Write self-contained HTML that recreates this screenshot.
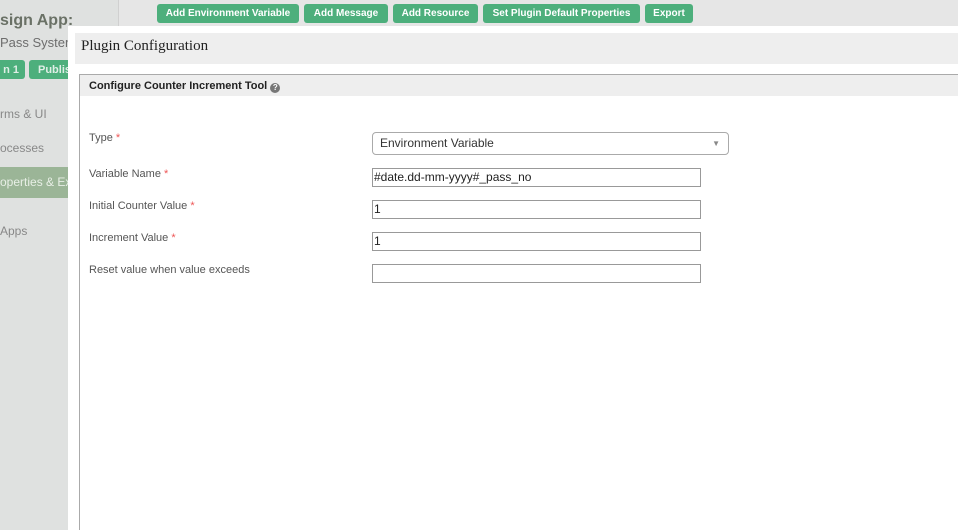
<!DOCTYPE html>
<html><head><style>
*{margin:0;padding:0;box-sizing:border-box}
body{width:958px;height:530px;overflow:hidden;position:relative;background:#e6e6e6;font-family:"Liberation Sans",Arial,sans-serif}
.side{position:absolute;left:0;top:0;width:119px;height:530px;background:#dfe1e0;border-right:1px solid #d0d0d0}
.abs{position:absolute;white-space:nowrap}
.btn{position:absolute;top:4px;height:19px;background:#4daf7c;color:#fff;font-size:10px;font-weight:bold;border-radius:3px;text-align:center;line-height:20px}
.modal{position:absolute;left:68px;top:26px;width:890px;height:504px;background:#fff}
.lbl{position:absolute;left:89px;font-size:11px;color:#555}
.req{color:#e55}
.inp{position:absolute;left:372px;width:329px;height:19px;border:1px solid #999;font-size:12px;line-height:17px;padding-left:1px;color:#222}
</style></head><body>
<div class="side">
<div class="abs" style="left:0;top:12px;font-size:16px;font-weight:bold;color:#6a7166">sign App:</div>
<div class="abs" style="left:0;top:35px;font-size:13px;color:#6d6d6d">Pass System</div>
<div class="abs" style="left:-10px;top:60px;width:35px;height:19px;background:#4daf7c;border-radius:3px;color:#dfeee6;font-size:11px;font-weight:bold;line-height:20px;text-align:right;padding-right:6px">n 1</div>
<div class="abs" style="left:29px;top:60px;width:50px;height:19px;background:#4daf7c;border-radius:3px;color:#dfeee6;font-size:11px;font-weight:bold;line-height:20px;padding-left:9px">Publis</div>
<div class="abs" style="left:0;top:107px;font-size:12px;color:#888">rms &amp; UI</div>
<div class="abs" style="left:0;top:141px;font-size:12px;color:#888">ocesses</div>
<div class="abs" style="left:0;top:167px;width:119px;height:31px;background:#9bb597"></div>
<div class="abs" style="left:0;top:175px;font-size:12px;color:#e8efe6">operties &amp; Exp</div>
<div class="abs" style="left:0;top:224px;font-size:12px;color:#888">Apps</div>
</div>
<div class="btn" style="left:157px;width:142px">Add Environment Variable</div>
<div class="btn" style="left:304px;width:84px">Add Message</div>
<div class="btn" style="left:393px;width:85px">Add Resource</div>
<div class="btn" style="left:483px;width:157px">Set Plugin Default Properties</div>
<div class="btn" style="left:645px;width:48px">Export</div>
<div class="modal"></div>
<div class="abs" style="left:75px;top:33px;width:883px;height:31px;background:#eeeeee"></div>
<div class="abs" style="left:81px;top:38px;font-family:'Liberation Serif',serif;font-size:15px;color:#222">Plugin Configuration</div>
<div class="abs" style="left:79px;top:74px;width:879px;height:22px;background:#eeeeee;border-top:1px solid #aaa"></div>
<div class="abs" style="left:79px;top:74px;width:1px;height:456px;background:#aaa"></div>
<div class="abs" style="left:89px;top:80px;font-size:11px;font-weight:bold;color:#222">Configure Counter Increment Tool <span style="display:inline-block;width:10px;height:10px;border-radius:50%;background:#777;color:#fff;font-size:8px;line-height:10px;text-align:center;vertical-align:-1px">?</span></div>
<div class="lbl" style="top:132px">Type <span class="req">*</span></div>
<div class="lbl" style="top:168px">Variable Name <span class="req">*</span></div>
<div class="lbl" style="top:200px">Initial Counter Value <span class="req">*</span></div>
<div class="lbl" style="top:232px">Increment Value <span class="req">*</span></div>
<div class="lbl" style="top:264px">Reset value when value exceeds</div>
<div class="abs" style="left:372px;top:132px;width:357px;height:23px;border:1px solid #aaa;border-radius:4px;font-size:12px;color:#333;line-height:21px;padding-left:7px">Environment Variable<span style="position:absolute;right:8px;top:0;font-size:8px;color:#888">&#9660;</span></div>
<div class="inp" style="top:168px">#date.dd-mm-yyyy#_pass_no</div>
<div class="inp" style="top:200px">1</div>
<div class="inp" style="top:232px">1</div>
<div class="inp" style="top:264px"></div>
</body></html>
